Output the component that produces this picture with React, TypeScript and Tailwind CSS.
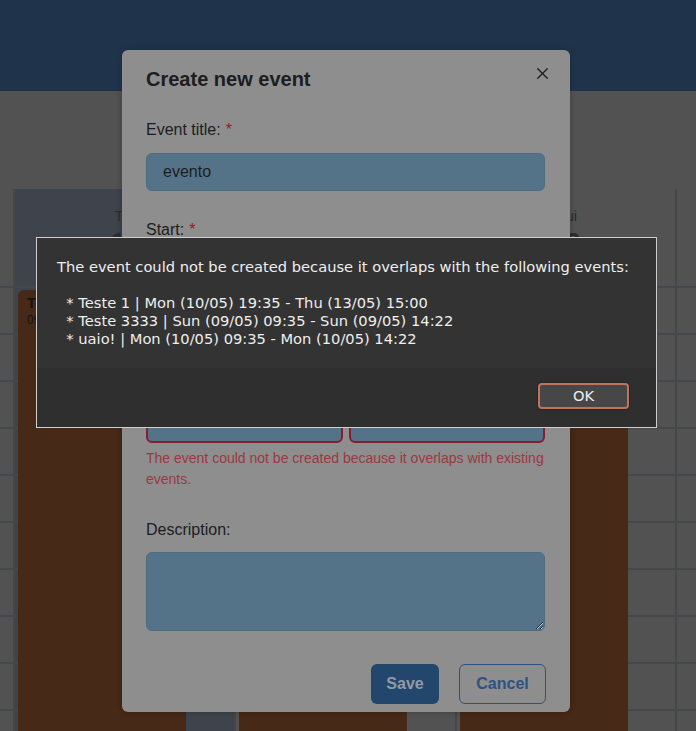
import { X } from "lucide-react";

const columns = [
  { name: "Ter", num: "11", today: true, width: "w-[221px]", title: "Teste 1", time: "09:35 - 14:22" },
  { name: "Qua", num: "12", today: false, width: "w-[221px]", title: "", time: "" },
  { name: "Qui", num: "13", today: false, width: "w-[220px]", title: "", time: "" },
];

const rows = [0, 1, 2, 3, 4, 5, 6, 7, 8, 9];

const alertText = `The event could not be created because it overlaps with the following events:

  * Teste 1 | Mon (10/05) 19:35 - Thu (13/05) 15:00
  * Teste 3333 | Sun (09/05) 09:35 - Sun (09/05) 14:22
  * uaio! | Mon (10/05) 09:35 - Mon (10/05) 14:22`;

const GridRows = () => (
  <>
    {rows.map((r) => (
      <div key={r} className="h-[47px] border-t-2 border-[#45474b]" />
    ))}
  </>
);

const Calendar = () => (
  <div className="flex font-['Liberation_Sans',sans-serif]">
    <div className="w-[13px] shrink-0">
      <div className="h-[97px]" />
      <GridRows />
    </div>
    {columns.map((c) => (
      <div
        key={c.name}
        className={`${c.width} shrink-0 border-l-2 border-[#45474b] ${c.today ? "bg-[#3f444c]" : ""}`}
      >
        <div className="flex h-[97px] flex-col items-center pt-[19px] text-[#2a2c30]">
          <span className="text-[14px] leading-[16px]">{c.name}</span>
          <span className="mt-[3px] text-[26px] font-bold leading-[30px]">{c.num}</span>
        </div>
        <div className="relative">
          <GridRows />
          <div className="absolute left-[3px] top-[4px] bottom-0 w-[168px] rounded-t-md bg-[#462916] px-[9px] pt-[4px] text-[#141414]">
            {c.title && <div className="text-[15px] font-bold leading-[18px]">{c.title}</div>}
            {c.time && <div className="text-[12px] leading-[16px]">{c.time}</div>}
          </div>
        </div>
      </div>
    ))}
    <div className="flex-1 border-l-2 border-[#45474b]">
      <div className="h-[97px]" />
      <GridRows />
    </div>
  </div>
);

const Label = ({ text, required }: { text: string; required?: boolean }) => (
  <div className="text-[16px] leading-[24px] text-[#1c1d1f]">
    {text}
    {required && <span className="ml-[5px] text-[#8e2227]">*</span>}
  </div>
);

const Modal = () => (
  <div className="absolute left-[122px] top-[50px] flex h-[662px] w-[448px] flex-col rounded-md bg-[#8e8e8e] pl-[24px] pr-[25px] pt-[16px] font-['Liberation_Sans',sans-serif] shadow-[0_0_6px_rgba(0,0,0,0.25)]">
    <div className="flex items-start justify-between">
      <h2 className="text-[20px] font-bold leading-[26px] text-[#1c1d1f]">Create new event</h2>
      <X className="mr-[-7px] mt-[-2px] h-[19px] w-[19px] text-[#1c1d1f]" strokeWidth={1.7} />
    </div>

    <div className="mt-[26px]">
      <Label text="Event title:" required />
    </div>
    <div className="mt-[11px] flex h-[38px] items-center rounded-md border border-[#4f6b7f] bg-[#557388] px-[16px] text-[16px] text-[#1c1d1f]">
      evento
    </div>

    <div className="mt-[27px]">
      <Label text="Start:" required />
    </div>
    <div className="mt-[11px] flex gap-[6px]">
      <div className="h-[38px] flex-1 rounded-md bg-[#557388]" />
      <div className="h-[38px] flex-1 rounded-md bg-[#557388]" />
    </div>
    <div className="mt-[74px]">
      <Label text="End:" required />
    </div>
    <div className="mt-[16px] flex gap-[6px]">
      <div className="h-[38px] flex-1 rounded-md border-2 border-[#861c32] bg-[#557388]" />
      <div className="h-[38px] flex-1 rounded-md border-2 border-[#861c32] bg-[#557388]" />
    </div>
    <p className="mt-[5px] text-[14px] leading-[21px] text-[#993a40]">
      The event could not be created because it overlaps with existing events.
    </p>

    <div className="mt-[28px]">
      <Label text="Description:" />
    </div>
    <textarea className="mt-[10px] h-[79px] w-full resize-y rounded-md border border-[#4f6b7f] bg-[#557388] outline-none" />

    <div className="mt-[33px] flex justify-end gap-[20px]">
      <button className="h-[40px] w-[68px] rounded-md bg-[#23466c] text-[16px] font-bold text-[#929aa3]">
        Save
      </button>
      <button className="mr-[-1px] h-[40px] w-[87px] rounded-md border border-[#2c5283] text-[16px] font-bold text-[#2c5283]">
        Cancel
      </button>
    </div>
  </div>
);

const AlertBox = () => (
  <div className="absolute left-[36px] top-[237px] flex h-[191px] w-[621px] flex-col border border-[#cfcfcf] bg-[#333333] font-['DejaVu_Sans',sans-serif] text-[#eeeeee]">
    <div className="h-[130px] whitespace-pre px-[20px] pt-[20px] text-[14.667px] leading-[18px]">
      {alertText}
    </div>
    <div className="flex flex-1 justify-end bg-[#2f2f2f] pr-[27px] pt-[15px]">
      <button className="h-[26px] w-[91px] rounded-[4px] border-2 border-[#c27259] bg-[#474747] text-[14.667px] leading-[20px] text-[#eeeeee] shadow-[0_0_0_1px_#262626]">
        OK
      </button>
    </div>
  </div>
);

export default function App() {
  return (
    <div className="relative h-[731px] w-[696px] overflow-hidden bg-[#525252]">
      <div className="h-[91px] bg-[#1f344b]" />
      <div className="mt-[98px]">
        <Calendar />
      </div>
      <Modal />
      <AlertBox />
    </div>
  );
}
